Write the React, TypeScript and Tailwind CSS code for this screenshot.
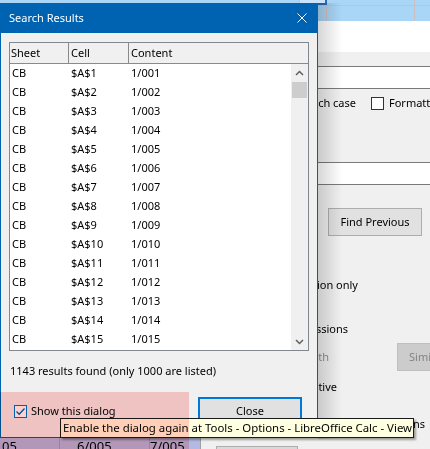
import React from 'react';

const rows = Array.from({ length: 15 }, (_, i) => ({
  sheet: 'CB',
  cell: `$A$${i + 1}`,
  content: `1/${String(i + 1).padStart(3, '0')}`,
}));

function Chevron({ up }: { up?: boolean }) {
  return (
    <svg width="9" height="6" viewBox="0 0 9 6" className="block">
      <path d={up ? 'M1 5L4.5 1.5L8 5' : 'M1 1L4.5 4.5L8 1'} fill="none" stroke="#606060" strokeWidth="1.5" />
    </svg>
  );
}

// Find & Replace window sitting behind the results dialog
function FindReplaceBehind() {
  return (
    <div className="absolute left-[200px] top-[21px] w-[240px] h-[440px] bg-[#f0f0f0] border-l border-[#a0a0a0] flex flex-col">
      <div className="h-[31px] bg-white shrink-0" />
      <div className="h-[14px] shrink-0" />
      <div className="h-[23px] bg-white border-y border-[#7a7a7a] shrink-0" />
      <div className="mt-[8px] h-[13px] flex items-center shrink-0">
        <span className="w-[155px] shrink-0 text-right whitespace-nowrap">Match case</span>
        <span className="ml-[15px] w-[13px] h-[13px] shrink-0 border border-[#333333] bg-white" />
        <span className="ml-[5px] shrink-0 whitespace-nowrap">Formatted display</span>
      </div>
      <div className="mt-[52px] h-[23px] bg-white border-y border-[#7a7a7a] shrink-0" />
      <div className="mt-[23px] ml-[127px] w-[94px] h-[28px] bg-[#e1e1e1] border border-[#adadad] flex items-center justify-center shrink-0">
        Find Previous
      </div>
      <div className="mt-[41px] h-[16px] leading-[16px] w-[157px] text-right whitespace-nowrap shrink-0">Current selection only</div>
      <div className="mt-[28px] h-[16px] leading-[16px] w-[147px] text-right whitespace-nowrap shrink-0">Regular expressions</div>
      <div className="mt-[6px] h-[28px] flex items-center shrink-0">
        <span className="w-[128px] shrink-0 text-right whitespace-nowrap text-[#8d8d8d]">Match width</span>
        <span className="ml-[68px] w-[90px] h-[28px] shrink-0 bg-[#cccccc] border border-[#bfbfbf] text-[#838383] flex items-center pl-[11px] whitespace-nowrap">
          Similarities...
        </span>
      </div>
      <div className="mt-[8px] h-[16px] leading-[16px] w-[136px] text-right whitespace-nowrap shrink-0">Diacritic-sensitive</div>
      <div className="mt-[21px] h-[16px] leading-[16px] w-[224px] text-right whitespace-nowrap shrink-0">Other options</div>
      <div className="mt-[14px] ml-[15px] w-[82px] h-[20px] bg-[#d9d9d9] border border-[#adadad] shrink-0" />
    </div>
  );
}

function Spreadsheet() {
  return (
    <div className="flex flex-col h-full">
      <div className="relative h-[21px] bg-[#a9d5f6] shrink-0">
        <div className="flex h-[6px] border-b border-[#cdbfbf]">
          <div className="w-[300px] border-r border-[#cdbfbf]" />
          <div className="w-[27px] bg-[#c9e4fa] border-r-2 border-b-2 border-[#2d6bb0]" />
          <div className="w-[88px] border-r border-[#cdbfbf]" />
        </div>
        <div className="flex h-[15px]">
          <div className="w-[327px] border-r border-[#cdbfbf]" />
          <div className="w-[88px] border-r border-[#cdbfbf]" />
        </div>
      </div>
      <div className="flex-1 bg-white" />
      <div className="h-[11px] flex bg-[#b3b9e2] overflow-hidden text-[13px] leading-[16px] shrink-0">
        <div className="w-[60px] border-r border-[#9aa0c8] pl-[2px]">05</div>
        <div className="w-[90px] border-r border-[#9aa0c8] pl-[17px]">6/005</div>
        <div className="w-[50px]">7/005</div>
      </div>
    </div>
  );
}

function SearchResults() {
  return (
    <div className="absolute left-0 top-[3px] w-[318px] h-[435px] bg-[#f0f0f0] border-x border-b border-[#0063b1] flex flex-col">
      <div className="h-[30px] bg-[#0063b1] flex items-center pl-[8px] text-white text-[11px] shrink-0">
        <span>Search Results</span>
        <svg width="10" height="10" viewBox="0 0 10 10" className="ml-auto mr-[10px]">
          <path d="M0.5 0.5L9.5 9.5M9.5 0.5L0.5 9.5" stroke="white" strokeWidth="1" />
        </svg>
      </div>
      <div className="flex flex-col px-[8px]">
        <div className="mt-[9px] w-[300px] h-[309px] border border-[#828790] bg-white flex flex-col">
          <div className="h-[21px] flex bg-[#f0f0f0] border-b border-[#8a8a8a] shrink-0">
            <div className="w-[59px] border-r border-[#8a8a8a] pl-[1px] flex items-center">Sheet</div>
            <div className="w-[60px] border-r border-[#8a8a8a] pl-[2px] flex items-center">Cell</div>
            <div className="flex-1 pl-[2px] flex items-center">Content</div>
          </div>
          <div className="flex-1 flex min-h-0">
            <div className="flex-1 flex flex-col">
              {rows.map((r) => (
                <div key={r.cell} className="h-[19px] flex items-center shrink-0">
                  <span className="w-[59px] pl-[2px]">{r.sheet}</span>
                  <span className="w-[60px] pl-[2px]">{r.cell}</span>
                  <span className="pl-[2px]">{r.content}</span>
                </div>
              ))}
            </div>
            <div className="w-[17px] bg-[#f0f0f0] flex flex-col">
              <div className="h-[17px] flex items-center justify-center">
                <Chevron up />
              </div>
              <div className="ml-[1px] mt-[1px] w-[15px] h-[16px] bg-[#cdcdcd]" />
              <div className="flex-1" />
              <div className="h-[17px] flex items-center justify-center">
                <Chevron />
              </div>
            </div>
          </div>
        </div>
        <div className="mt-[12px] h-[16px] leading-[16px] pl-[1px]">1143 results found (only 1000 are listed)</div>
        <div className="mt-[18px] flex items-start">
          <div className="ml-[5px] mt-[7px] flex items-center">
            <span className="w-[13px] h-[13px] border border-[#0078d7] bg-white flex items-center justify-center">
              <svg width="11" height="11" viewBox="0 0 11 11">
                <path d="M1.5 5.5L4.2 8.3L9.5 2.5" fill="none" stroke="#0063b1" strokeWidth="1.3" />
              </svg>
            </span>
            <span className="ml-[4px] leading-[14px]">Show this dialog</span>
          </div>
          <div className="ml-auto mr-[7px] w-[104px] h-[28px] border-2 border-[#0078d7] bg-[#e1e1e1] flex items-center justify-center">
            Close
          </div>
        </div>
      </div>
    </div>
  );
}

export default function App() {
  return (
    <div className="relative w-[430px] h-[449px] overflow-hidden bg-[#f0f0f0] font-['Noto_Sans',sans-serif] text-[11px] text-black">
      <div className="absolute inset-0">
        <Spreadsheet />
      </div>
      <FindReplaceBehind />
      <SearchResults />
      <div className="absolute left-[318px] top-[3px] w-[24px] h-[436px] bg-linear-to-r from-[rgba(0,0,0,0.16)] to-transparent" />
      <div className="absolute left-[60px] top-[418px] w-[354px] h-[20px] bg-[#ffffe1] border border-[#1a1a1a] pl-[2px] text-[11.4px] leading-[18px] whitespace-nowrap shadow-[2px_2px_2px_rgba(0,0,0,0.35)]">
        Enable the dialog again at Tools - Options - LibreOffice Calc - View
      </div>
      <div className="absolute left-0 top-[392px] w-[189px] h-[57px] bg-[#ffd0d0] mix-blend-multiply pointer-events-none" />
    </div>
  );
}
